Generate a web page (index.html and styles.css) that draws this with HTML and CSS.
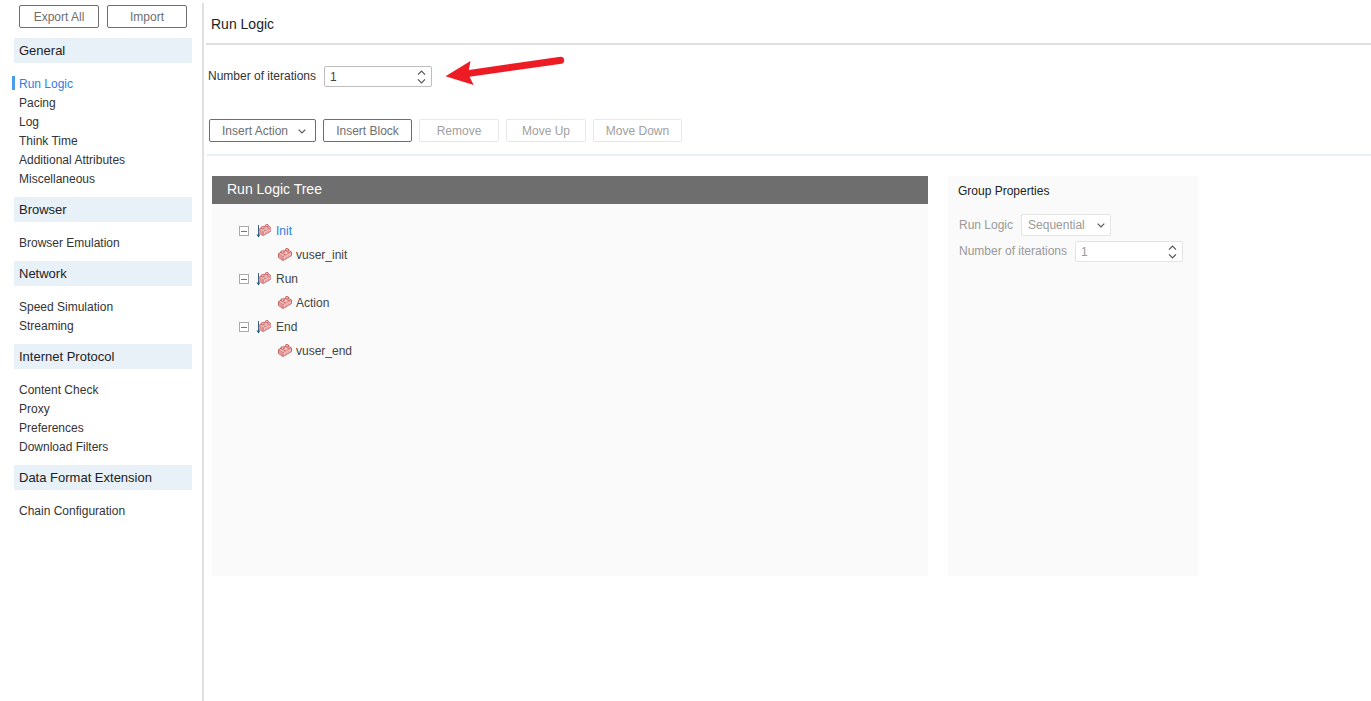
FILE: index.html
```html
<!DOCTYPE html>
<html lang="en">
<head>
<meta charset="utf-8">
<title>Run Logic</title>
<link rel="stylesheet" href="styles.css">
</head>
<body>
<svg class="defs" aria-hidden="true">
  <symbol id="brick" viewBox="0 0 14 14">
    <path d="M.5 5.500 9.500 1.500 13.500 4V7.500L5 12.500 .5 9.500Z" fill="#f3c0c0" stroke="#c86464" stroke-width="1"/>
    <path d="M1 6 5 8.500V12L1 9.300Z" fill="#e79a9a"/>
    <path d="M1 6 5 8.500 13 4.300" fill="none" stroke="#d98080" stroke-width=".8"/>
    <path d="M5 8.500V12" stroke="#c86464" stroke-width=".8"/>
    <g fill="#f3c6c6" stroke="#b95050" stroke-width=".9">
      <ellipse cx="4.500" cy="4" rx="1.700" ry="1.300"/>
      <ellipse cx="9" cy="1.800" rx="1.700" ry="1.300"/>
    </g>
    <path d="M5.500 6.500H7.500M9.500 4.500H11.500" stroke="#c86464" stroke-width="1"/>
    <path d="M7 9.500 12 6.700" stroke="#dc8e8e" stroke-width="1" stroke-dasharray="1 1"/>
  </symbol>
  <symbol id="group" viewBox="0 0 15 14">
    <use href="#brick" x="2.500" y="0" width="13" height="13"/>
    <path d="M2.500 1V12" stroke="#3f6186" stroke-width="1"/>
    <path d="M.500 10.500H4.500L2.500 13.500Z" fill="#2f557f"/>
  </symbol>
  <symbol id="down" viewBox="0 0 8 5">
    <path d="M.7.700 4 4 7.300.7" fill="none" stroke="currentColor" stroke-width="1.200"/>
  </symbol>
  <symbol id="stepper" viewBox="0 0 9 14">
    <path d="M1 4.700 4.500 1.200 8 4.700M1 9.300 4.500 12.800 8 9.300" fill="none" stroke="currentColor" stroke-width="1.200"/>
  </symbol>
</svg>
<div class="app">
  <nav class="sidebar">
    <div class="transfer">
      <button class="btn" type="button">Export All</button>
      <button class="btn" type="button">Import</button>
    </div>
    <h2>General</h2>
    <ul>
      <li><a class="active" href="#run-logic">Run Logic</a></li>
      <li><a href="#pacing">Pacing</a></li>
      <li><a href="#log">Log</a></li>
      <li><a href="#think-time">Think Time</a></li>
      <li><a href="#attributes">Additional Attributes</a></li>
      <li><a href="#misc">Miscellaneous</a></li>
    </ul>
    <h2>Browser</h2>
    <ul>
      <li><a href="#emulation">Browser Emulation</a></li>
    </ul>
    <h2>Network</h2>
    <ul>
      <li><a href="#speed">Speed Simulation</a></li>
      <li><a href="#streaming">Streaming</a></li>
    </ul>
    <h2>Internet Protocol</h2>
    <ul>
      <li><a href="#content">Content Check</a></li>
      <li><a href="#proxy">Proxy</a></li>
      <li><a href="#preferences">Preferences</a></li>
      <li><a href="#filters">Download Filters</a></li>
    </ul>
    <h2>Data Format Extension</h2>
    <ul>
      <li><a href="#chain">Chain Configuration</a></li>
    </ul>
  </nav>
  <main class="main">
    <h1>Run Logic</h1>
    <div class="iterations">
      <label for="iterations">Number of iterations</label>
      <span class="field number">
        <input id="iterations" type="number" value="1" min="1">
        <svg class="stepper"><use href="#stepper"/></svg>
      </span>
      <svg class="pointer" viewBox="0 0 120 30" aria-hidden="true">
        <path d="M.5 14.300 25.500-1 23.800 8 115.500-5.200A3.500 3.500 0 0 1 116.500 1.700L24.500 14.800 28.700 23Z" fill="#ed1c24"/>
      </svg>
    </div>
    <div class="toolbar">
      <button class="btn menu" type="button">Insert Action <svg class="chevron"><use href="#down"/></svg></button>
      <button class="btn wide" type="button">Insert Block</button>
      <button class="btn" type="button" disabled>Remove</button>
      <button class="btn" type="button" disabled>Move Up</button>
      <button class="btn wide" type="button" disabled>Move Down</button>
    </div>
    <div class="panels">
      <section class="tree-panel">
        <h2>Run Logic Tree</h2>
        <ul class="tree">
          <li>
            <div class="node"><button class="toggle" type="button" aria-label="Collapse Init"></button><svg class="group-icon"><use href="#group"/></svg><span class="selected">Init</span></div>
            <ul><li class="node"><svg class="brick"><use href="#brick"/></svg><span>vuser_init</span></li></ul>
          </li>
          <li>
            <div class="node"><button class="toggle" type="button" aria-label="Collapse Run"></button><svg class="group-icon"><use href="#group"/></svg><span>Run</span></div>
            <ul><li class="node"><svg class="brick"><use href="#brick"/></svg><span>Action</span></li></ul>
          </li>
          <li>
            <div class="node"><button class="toggle" type="button" aria-label="Collapse End"></button><svg class="group-icon"><use href="#group"/></svg><span>End</span></div>
            <ul><li class="node"><svg class="brick"><use href="#brick"/></svg><span>vuser_end</span></li></ul>
          </li>
        </ul>
      </section>
      <section class="properties">
        <h2>Group Properties</h2>
        <div class="property">
          <label for="mode">Run Logic</label>
          <span class="field choice">
            <select id="mode" disabled><option>Sequential</option><option>Random</option></select>
            <svg class="chevron"><use href="#down"/></svg>
          </span>
        </div>
        <div class="property">
          <label for="group-iterations">Number of iterations</label>
          <span class="field number">
            <input id="group-iterations" type="number" value="1" disabled>
            <svg class="stepper"><use href="#stepper"/></svg>
          </span>
        </div>
      </section>
    </div>
  </main>
</div>
</body>
</html>
```
FILE: styles.css
```css
* { box-sizing: border-box; }
body {
  margin: 0;
  background: #fff;
  color: #333;
  font: 12px/19px "Liberation Sans", Arial, sans-serif;
}
h1, h2, ul { margin: 0; padding: 0; font-weight: 400; }
ul { list-style: none; }
button, input, select { font: inherit; color: inherit; }
svg { flex: none; }
.defs { position: absolute; width: 0; height: 0; }

.app { display: flex; min-height: 100vh; padding-top: 3px; }
.sidebar {
  flex: none;
  width: 204px;
  padding: 2px 10px 0 14px;
  border-right: 2px solid #e0e0e0;
}
.transfer { display: flex; gap: 8px; margin-bottom: 10px; padding-left: 5px; }
.sidebar h2 {
  padding-left: 5px;
  background: #e8f0f8;
  color: #222;
  font-size: 13px;
  line-height: 25px;
}
.sidebar ul { padding: 12px 0 8px; }
.sidebar a { display: block; padding-left: 5px; color: #333; text-decoration: none; }
.sidebar a.active {
  margin-left: -2px;
  padding-left: 7px;
  background: linear-gradient(#4a9de8, #4a9de8) 0 1px / 3px 14px no-repeat;
  color: #2f7de0;
}

.btn {
  display: flex;
  align-items: center;
  justify-content: center;
  width: 80px;
  height: 23px;
  padding: 1px 0 0;
  border: 1px solid #6e6e6e;
  border-radius: 2px;
  background: #fff;
  color: #6e6e6e;
}
.btn:disabled { border-color: #e8e8e8; color: #a0a0a0; }
.wide { width: 89px; }
.menu { width: 107px; gap: 10px; padding-left: 3px; }
.chevron { width: 8px; height: 5px; color: #555; }

.main { flex: 1; min-width: 0; padding-left: 2px; }
.main h1 {
  height: 42px;
  padding-left: 5px;
  border-bottom: 2px solid #e0e0e0;
  color: #222;
  font-size: 14px;
  line-height: 42px;
}
.iterations { display: flex; align-items: center; gap: 8px; padding: 21px 0 32px 2px; }
.field { position: relative; display: flex; color: #444; }
.field input, .field select {
  width: 108px;
  height: 21px;
  margin: 0;
  padding: 0 5px;
  border: 1px solid #bdbdbd;
  border-radius: 2px;
  background: #fff;
  appearance: none;
}
.field input { appearance: textfield; }
.field input::-webkit-inner-spin-button { appearance: none; }
.field .stepper { position: absolute; top: 4px; right: 6px; width: 9px; height: 14px; color: #555; pointer-events: none; }
.field .chevron { position: absolute; top: 9px; right: 6px; pointer-events: none; }
.pointer { width: 120px; height: 30px; margin: -8px 0 -8px 5px; overflow: visible; }

.toolbar {
  display: flex;
  gap: 7px;
  margin-left: 1px;
  padding: 0 2px 12px;
  border-bottom: 2px solid #e8f0f8;
}
.panels { display: flex; gap: 20px; padding: 20px 20px 20px 6px; }
.tree-panel { flex: 0 1 716px; min-height: 400px; background: #fafafa; }
.tree-panel h2 {
  height: 28px;
  padding-left: 15px;
  background: #6e6e6e;
  color: #fff;
  font-size: 14px;
  line-height: 26px;
}
.tree { padding: 15px 0 0 27px; color: #444; }
.node { display: flex; align-items: center; height: 24px; }
.tree ul { padding-left: 39px; }
.toggle {
  width: 10px;
  height: 10px;
  margin-right: 7px;
  padding: 0;
  border: 1px solid #aaa;
  background: linear-gradient(#777, #777) center / 6px 1px no-repeat #fff;
}
.group-icon { width: 15px; height: 14px; margin-right: 5px; overflow: visible; }
.brick { width: 14px; height: 14px; margin-right: 4px; }
.selected { color: #2f7de0; }

.properties { flex: 0 0 250px; padding: 6px 10px; background: #fafafa; color: #999; }
.properties h2 { margin-bottom: 13px; color: #222; font-size: 12px; line-height: 19px; }
.property { display: flex; align-items: center; gap: 8px; margin-bottom: 5px; padding-left: 1px; }
.properties .field input, .properties .field select { border-color: #e4e4e4; color: #999; opacity: 1; }
.properties .field select { width: 90px; height: 22px; padding: 0 6px; }
```
